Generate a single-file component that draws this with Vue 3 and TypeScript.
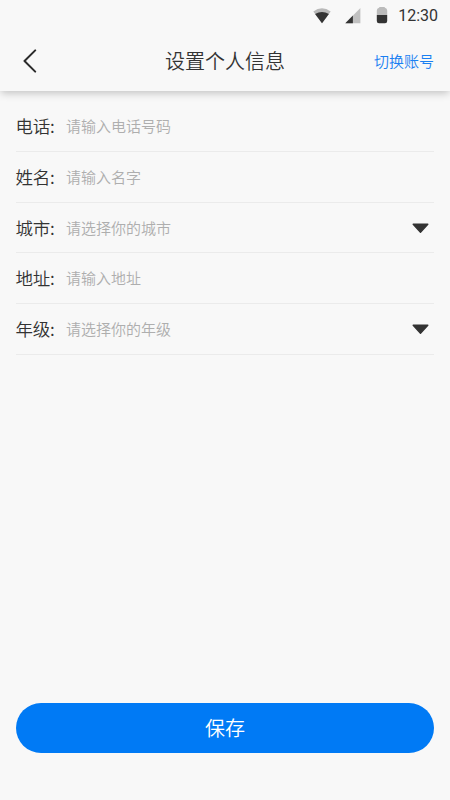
<script setup lang="ts">
import { reactive } from 'vue'

interface Field {
  key: string
  label: string
  hint: string
  select: boolean
}

const fields: Field[] = [
  { key: 'phone', label: '电话', hint: '请输入电话号码', select: false },
  { key: 'name', label: '姓名', hint: '请输入名字', select: false },
  { key: 'city', label: '城市', hint: '请选择你的城市', select: true },
  { key: 'address', label: '地址', hint: '请输入地址', select: false },
  { key: 'grade', label: '年级', hint: '请选择你的年级', select: true },
]

const form = reactive<Record<string, string>>({})
</script>

<template>
  <div class="screen">
    <header class="top">
      <div class="status">
        <svg class="wifi" width="18" height="16" viewBox="0 0 18 16">
          <path d="M0.3 3.6Q9-3.2 17.7 3.6L9 15.3Z" fill="#b9b9b9" />
          <path d="M2.1 6Q9 2 15.9 6L9 15.3Z" fill="#333" />
        </svg>
        <svg class="signal" width="16" height="16" viewBox="0 0 16 16">
          <path d="M15.4 0V15.3H0.3Z" fill="#c0c0c0" />
          <path d="M7.9 7.6V15.3H0.3Z" fill="#333" />
        </svg>
        <svg class="battery" width="12" height="17" viewBox="0 0 12 17">
          <path d="M3 0.8Q3 0 4 0H8Q9 0 9 0.8Q11.2 1.5 11.2 3.5V8H0.8V3.5Q0.8 1.5 3 0.8Z" fill="#bbb" />
          <path d="M0.8 8H11.2V14Q11.2 16.3 9 16.3H3Q0.8 16.3 0.8 14Z" fill="#333" />
        </svg>
        <span class="time">12:30</span>
      </div>
      <nav class="bar">
        <button class="back" aria-label="返回">
          <svg width="14" height="24" viewBox="0 0 14 24">
            <path d="M12.2 1.4L1.5 12L12.2 22.6" fill="none" stroke="#2b2b2b" stroke-width="2" stroke-linecap="round" stroke-linejoin="round" />
          </svg>
        </button>
        <h1 class="title">设置个人信息</h1>
        <button class="switch">切换账号</button>
      </nav>
    </header>
    <main class="form">
      <label v-for="f in fields" :key="f.key" class="row">
        <span class="label">{{ f.label }}:</span>
        <span class="value">{{ form[f.key] || f.hint }}</span>
        <svg v-if="f.select" class="caret" width="17" height="11" viewBox="0 0 17 11">
          <path d="M1.2 1.3H15.8L8.5 9.3Z" fill="#333" stroke="#333" stroke-width="1.4" stroke-linejoin="round" />
        </svg>
      </label>
    </main>
    <footer class="foot">
      <button class="save">保存</button>
    </footer>
  </div>
</template>

<style>
body {
  background: #f8f8f8;
}
</style>

<style scoped>
.screen {
  display: flex;
  flex-direction: column;
  height: 800px;
  background: #f8f8f8;
  color: #333;
  font-family: "Noto Sans CJK SC", sans-serif;
  font-weight: 350;
}
button {
  padding: 0;
  border: 0;
  background: none;
  font: inherit;
  line-height: 1;
}
.top {
  height: 91px;
  box-shadow: 0 3px 8px -1px rgba(0, 0, 0, 0.23);
}
.status {
  display: flex;
  justify-content: flex-end;
  align-items: center;
  height: 31px;
  padding-right: 12px;
}
.signal {
  margin-left: 14px;
}
.battery {
  margin-left: 15px;
}
.time {
  margin-left: 10px;
  font: 400 16px/31px Roboto, sans-serif;
}
.bar {
  display: grid;
  grid-template-columns: 1fr auto 1fr;
  align-items: center;
  height: 60px;
  padding: 0 16px 0 23px;
}
.back {
  width: 14px;
  height: 24px;
}
.back svg {
  display: block;
}
.title {
  margin: 0 0 0 -7px;
  font-size: 20px;
  line-height: 30px;
  font-weight: 350;
}
.switch {
  justify-self: end;
  margin-bottom: 2px;
  color: #1a80f2;
  font-size: 15px;
}
.form {
  flex: 1;
  padding: 10.5px 16px 0;
}
.row {
  display: flex;
  align-items: center;
  height: 50.65px;
  box-sizing: border-box;
  border-bottom: 1px solid #ebebeb;
}
.label {
  width: 50.5px;
  margin-left: -0.5px;
  padding-bottom: 1px;
  font-size: 17.5px;
  letter-spacing: -0.2px;
}
.value {
  flex: 1;
  padding-bottom: 1px;
  color: #aeaeae;
  font-size: 15px;
}
.caret {
  margin-right: 5px;
  margin-top: 2px;
}
.foot {
  padding: 0 16px 47px;
}
.save {
  display: block;
  width: 100%;
  height: 50px;
  border-radius: 25px;
  background: #007af5;
  color: #fff;
  font-size: 20px;
}
</style>
